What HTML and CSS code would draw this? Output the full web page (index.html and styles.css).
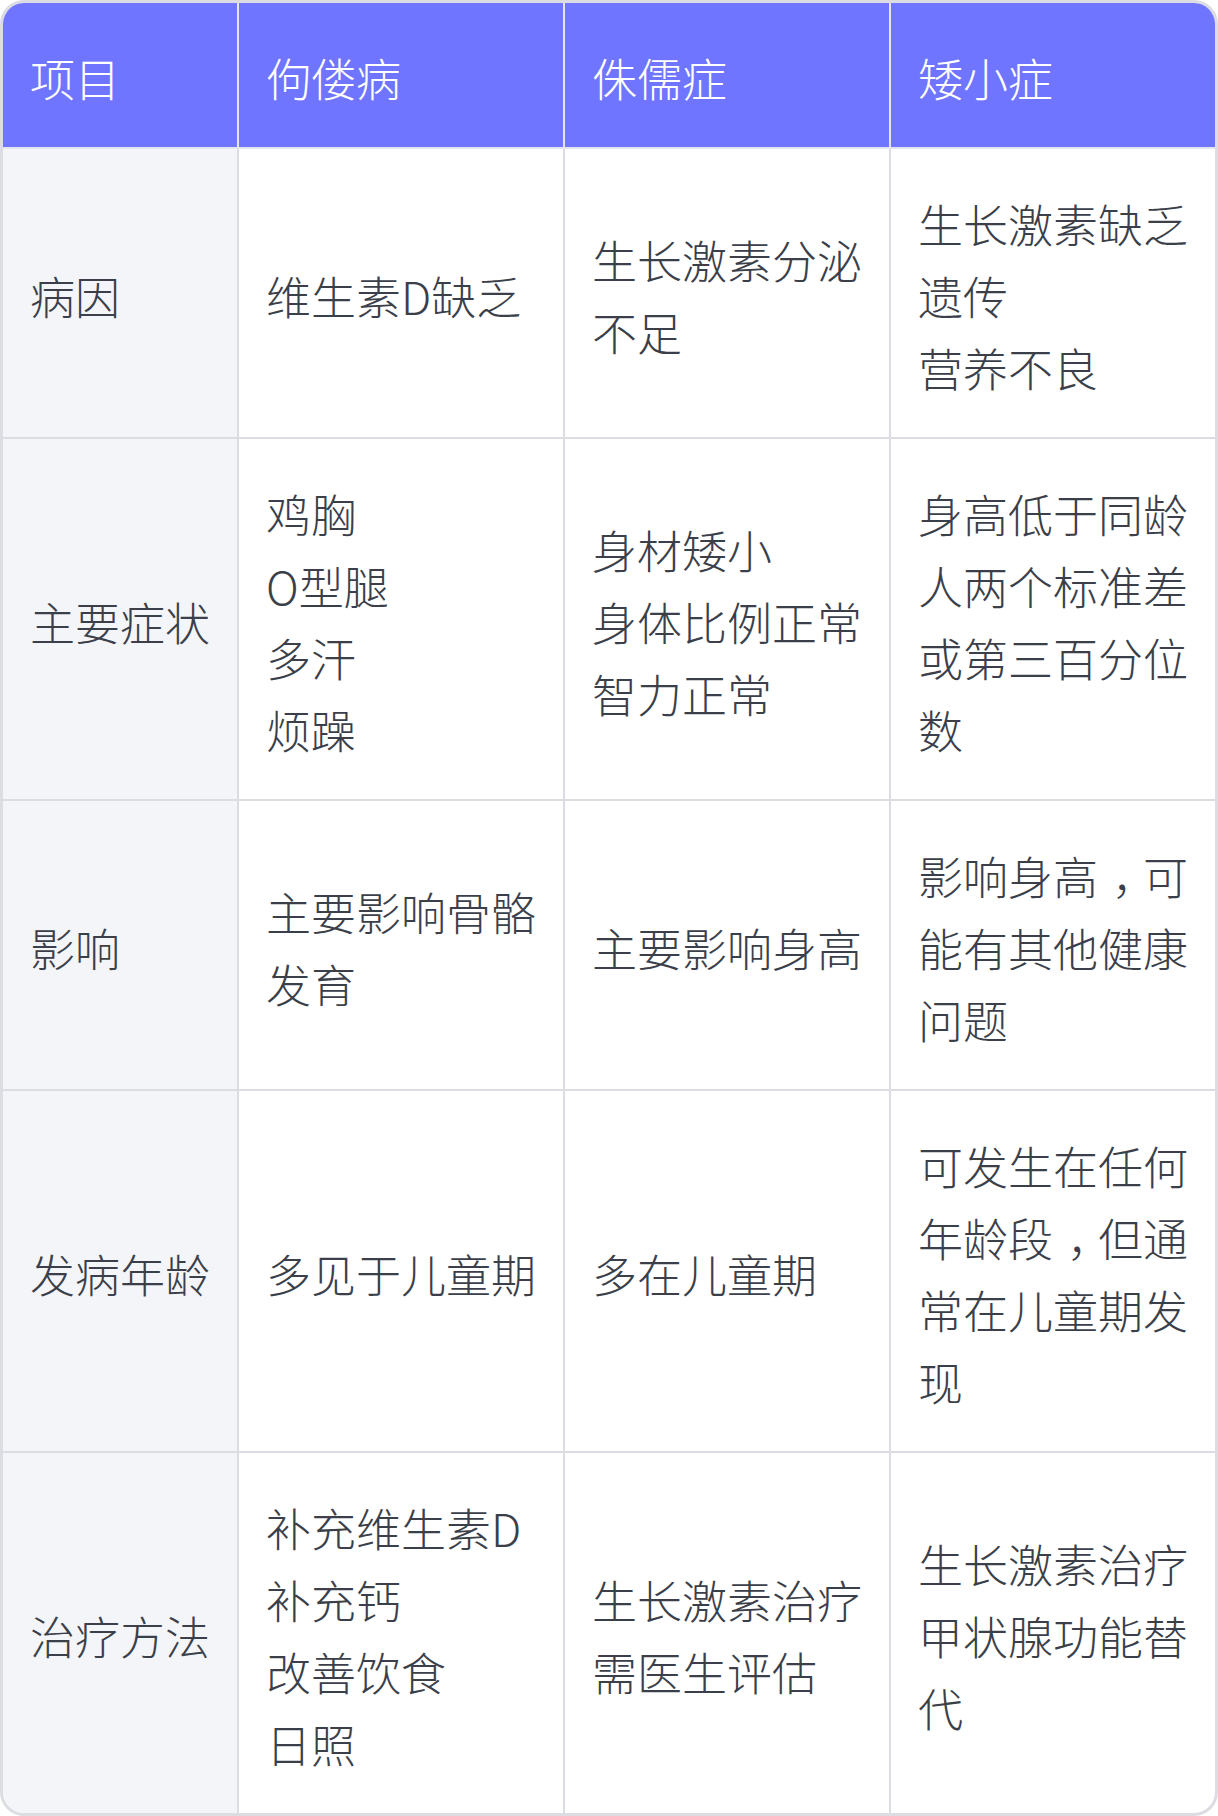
FILE: index.html
```html
<!DOCTYPE html>
<html lang="zh-CN">
<head>
<meta charset="utf-8">
<title>疾病对比</title>
<link rel="stylesheet" href="styles.css">
</head>
<body>
<div class="wrap">
<table class="cmp">
  <thead>
    <tr><th class="w1">项目</th><th class="w2">佝偻病</th><th class="w2">侏儒症</th><th class="w4">矮小症</th></tr>
  </thead>
  <tbody>
    <tr>
      <td class="key">病因</td>
      <td>维生素D缺乏</td>
      <td>生长激素分泌不足</td>
      <td>生长激素缺乏<br>遗传<br>营养不良</td>
    </tr>
    <tr>
      <td class="key">主要症状</td>
      <td>鸡胸<br>O型腿<br>多汗<br>烦躁</td>
      <td>身材矮小<br>身体比例正常<br>智力正常</td>
      <td>身高低于同龄人两个标准差或第三百分位数</td>
    </tr>
    <tr>
      <td class="key">影响</td>
      <td>主要影响骨骼发育</td>
      <td>主要影响身高</td>
      <td>影响身高<span class="punct">，</span>可能有其他健康问题</td>
    </tr>
    <tr>
      <td class="key">发病年龄</td>
      <td>多见于儿童期</td>
      <td>多在儿童期</td>
      <td>可发生在任何年龄段<span class="punct">，</span>但通常在儿童期发现</td>
    </tr>
    <tr>
      <td class="key">治疗方法</td>
      <td>补充维生素D<br>补充钙<br>改善饮食<br>日照</td>
      <td>生长激素治疗<br>需医生评估</td>
      <td>生长激素治疗<br>甲状腺功能替代</td>
    </tr>
  </tbody>
</table>
</div>
</body>
</html>
```
FILE: styles.css
```css
html, body {
  margin: 0;
  padding: 0;
  background: #ffffff;
}
.wrap {
  width: 1218px;
  height: 1816px;
  box-sizing: border-box;
  border: 3px solid #dcdde2;
  border-radius: 24px;
  overflow: hidden;
}
.cmp {
  width: 1212px;
  border-collapse: separate;
  border-spacing: 0;
  table-layout: fixed;
  font-family: "Noto Sans CJK SC", "Noto Sans", sans-serif;
  font-weight: 200;
  font-size: 45px;
  line-height: 72px;
  color: #3b3f4a;
}
.cmp th, .cmp td {
  box-sizing: border-box;
  padding: 39px 26px 33px 27px;
  text-align: left;
  vertical-align: middle;
  border-right: 2px solid #dcdde2;
  border-bottom: 2px solid #dcdde2;
  word-break: break-all;
}
.cmp .w1 { width: 236px; }
.cmp .w2 { width: 326px; }
.cmp .w4 { width: 324px; }
.cmp th:last-child, .cmp td:last-child {
  border-right: 0;
}
.cmp tbody tr:last-child td {
  border-bottom: 0;
}
.cmp th {
  background: #6f75ff;
  color: #ffffff;
  font-weight: 200;
  border-right-color: #e4e5ee;
  border-bottom-color: #e4e5ee;
}
.cmp td.key {
  background: #f4f5f9;
}
.punct {
  padding-left: 14px;
  letter-spacing: -14px;
  white-space: nowrap;
}
```
